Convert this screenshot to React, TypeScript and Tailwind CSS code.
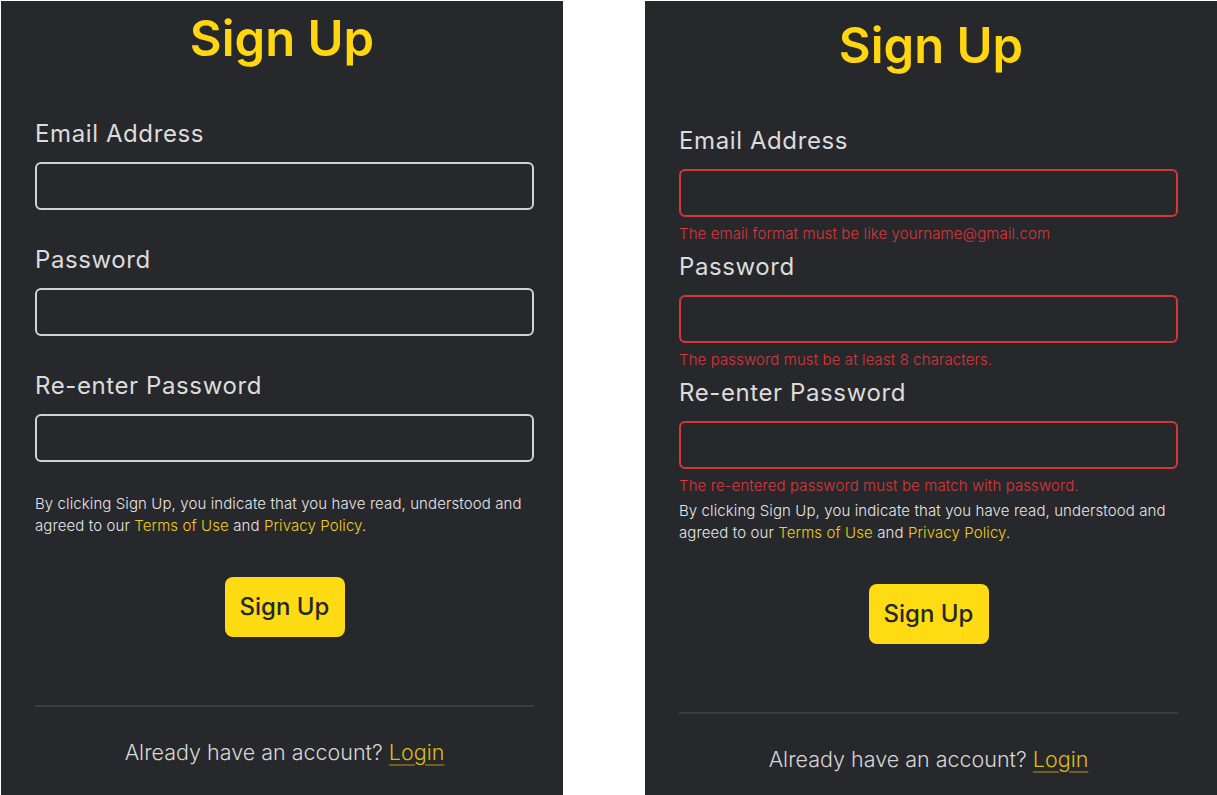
const FONT = { fontFamily: "Inter, 'Noto Sans', sans-serif" };

type Field = { label: string; error?: string };

function FormPanel({ fields, className }: { fields: Field[]; className: string }) {
  return (
    <div className={`flex flex-col bg-[#27282b] px-[34px] ${className}`} style={FONT}>
      <h1 className="text-center text-[49px] font-semibold leading-none text-[#ffd60f]">Sign Up</h1>

      <form className="mt-[52px] flex w-[499px] flex-col" onSubmit={(e) => e.preventDefault()}>
        {fields.map((field) => (
          <div key={field.label} className="flex flex-col">
            <label className="text-[24px] leading-[38px] tracking-[0.6px] text-[#dcdcdc]">{field.label}</label>
            <input
              type={field.label === "Email Address" ? "email" : "password"}
              className={`mt-[9px] h-12 w-full rounded-[6px] border-2 bg-transparent px-3 text-[#e5e5e5] outline-none ${
                field.error ? "border-[#d0383a]" : "border-[#d2d2d2]"
              }`}
            />
            <div className="h-[31px]">
              {field.error ? (
                <p className="mt-[7px] text-[15px] font-light leading-[20px] tracking-[0.1px] text-[#d8383c]">
                  {field.error}
                </p>
              ) : null}
            </div>
          </div>
        ))}

        <p className="text-[15px] font-light leading-[22px] tracking-[0.1px] text-[#e6e6e6]">
          By clicking Sign Up, you indicate that you have read, understood and agreed to our{" "}
          <a className="text-[#f0cf12]">Terms of Use</a> and <a className="text-[#f0cf12]">Privacy Policy</a>.
        </p>

        <div className="mt-10 flex justify-center">
          <button
            type="submit"
            className="h-[60px] w-[120px] rounded-[8px] bg-[#ffdb13] text-[24px] font-medium text-[#26272a]"
          >
            Sign Up
          </button>
        </div>
      </form>

      <div className="mt-[68px] h-[2px] w-[499px] bg-[#3b3c3f]" />

      <p className="mt-[30px] w-[499px] text-center text-[21.5px] font-light leading-[30px] text-[#d6d6d6]">
        Already have an account?{" "}
        <a className="text-[#dcbb12] underline decoration-[#6e6020] underline-offset-4">Login</a>
      </p>
    </div>
  );
}

export default function App() {
  return (
    <div className="flex h-[795px] w-[1217px] gap-[82px] overflow-hidden bg-white pl-px pt-px">
      <FormPanel
        className="w-[562px] shrink-0 pt-[13px]"
        fields={[{ label: "Email Address" }, { label: "Password" }, { label: "Re-enter Password" }]}
      />
      <FormPanel
        className="w-[572px] shrink-0 pt-[20px]"
        fields={[
          { label: "Email Address", error: "The email format must be like yourname@gmail.com" },
          { label: "Password", error: "The password must be at least 8 characters." },
          { label: "Re-enter Password", error: "The re-entered password must be match with password." },
        ]}
      />
    </div>
  );
}
